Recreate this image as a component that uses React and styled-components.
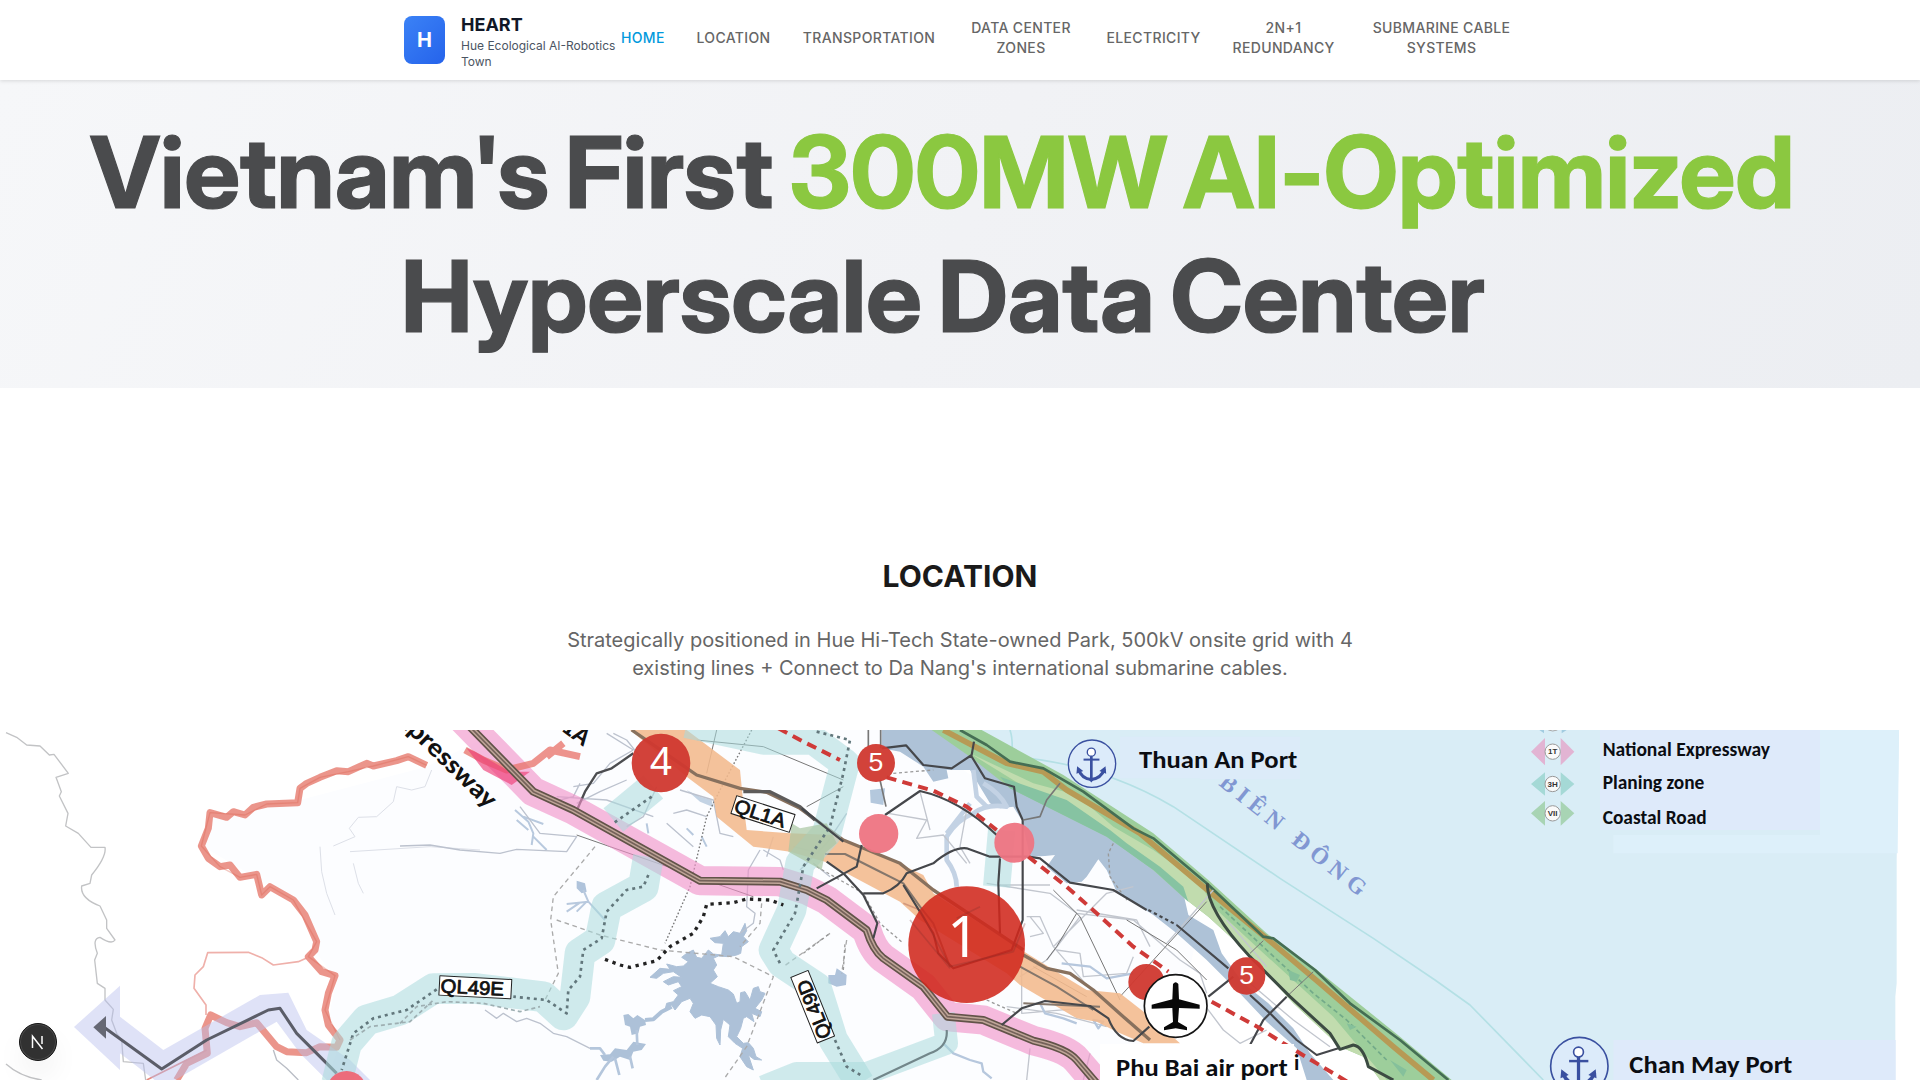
import React from "react";
import styled, { createGlobalStyle } from "styled-components";

const GlobalStyle = createGlobalStyle`
  * { box-sizing: border-box; }
  body { margin: 0; background: #fff; overflow: hidden; font-family: Inter, "Liberation Sans", sans-serif; }
  h1, h2, p { margin: 0; }
`;

const Page = styled.div`
  height: 1080px;
  overflow: hidden;
  background: #fff;
`;

const Header = styled.header`
  position: relative;
  z-index: 1;
  height: 80px;
  background: #fff;
  box-shadow: 0 1px 4px rgba(0, 0, 0, 0.13);
`;

const HeaderInner = styled.div`
  display: flex;
  height: 80px;
  padding-left: 404px;
`;

const Brand = styled.div`
  display: flex;
  align-items: center;
  gap: 16px;
  width: 217px;
  flex: none;
`;

const BrandMark = styled.div`
  display: grid;
  place-items: center;
  flex: none;
  width: 41px;
  height: 48px;
  border-radius: 8px;
  background: linear-gradient(135deg, #3b82f6, #2563eb);
  color: #fff;
  font-size: 20px;
  font-weight: 700;
`;

const BrandText = styled.div`
  padding-top: 4px;
`;

const BrandName = styled.div`
  font-size: 18px;
  line-height: 20px;
  font-weight: 700;
  color: #111827;
`;

const BrandTagline = styled.div`
  margin-top: 3px;
  width: 160px;
  font-size: 12px;
  line-height: 16px;
  color: #4b5563;
`;

const Nav = styled.nav`
  display: flex;
  align-items: center;
  gap: 32px;
  padding-bottom: 4px;
`;

const NavItem = styled.a`
  width: ${(p) => p.$w}px;
  flex: none;
  font-size: 14px;
  line-height: 20px;
  font-weight: 500;
  letter-spacing: 0.35px;
  text-align: center;
  white-space: pre-line;
  color: ${(p) => (p.$active ? "#0099dd" : "#666")};
`;

const Hero = styled.section`
  height: 308px;
  padding-top: 30px;
  background: linear-gradient(115deg, #f6f7f9 0%, #f1f2f5 50%, #eceef2 100%);
`;

const HeroLine = styled.div`
  padding-left: ${(p) => p.$indent}px;
  font-family: "Inter Display", Inter, sans-serif;
  font-variation-settings: "opsz" 32;
  font-size: 99.5px;
  line-height: 124px;
  font-weight: 700;
  letter-spacing: -0.2px;
  word-spacing: -5px;
  -webkit-text-stroke: 1.2px currentColor;
  white-space: nowrap;
  color: #4a4b4d;
`;

const Accent = styled.span`
  color: #8bc840;
`;

const Intro = styled.section`
  height: 342px;
  padding-top: 164px;
  text-align: center;
`;

const IntroTitle = styled.h2`
  font-size: 30px;
  line-height: 48px;
  font-weight: 700;
  color: #1a1a1a;
`;

const IntroText = styled.p`
  width: 800px;
  margin: 26px auto 0;
  font-size: 20px;
  line-height: 28px;
  color: #666;
`;

const MapFrame = styled.section`
  height: 350px;
  svg { display: block; }
`;

const DevBadge = styled.div`
  position: absolute;
  left: 19px;
  top: 1023px;
  width: 38px;
  height: 38px;
  border-radius: 50%;
  background: #313131;
  border: 1px solid #141414;
  box-shadow: inset 0 0 0 1px #4a4a4a, 0 16px 32px -8px rgba(0, 0, 0, 0.14);
  display: grid;
  place-items: center;
`;

const NAV = [
  ["HOME", 43.5],
  ["LOCATION", 74],
  ["TRANSPORTATION", 133],
  ["DATA CENTER\nZONES", 107],
  ["ELECTRICITY", 94],
  ["2N+1\nREDUNDANCY", 102],
  ["SUBMARINE CABLE\nSYSTEMS", 150],
];

const Label = ({ x, y, w, size = 73, children }) => (
  <text x={x} y={y} fontSize={size} textLength={w} lengthAdjust="spacingAndGlyphs"
    fontFamily='Carlito, "Open Sans", Lato, sans-serif' fontWeight="700" fill="#0b0d12">
    {children}
  </text>
);

const Anchor = ({ x, y, r }) => (
  <g transform={`translate(${x} ${y}) scale(${r / 70})`} fill="none" stroke="#3a50a0">
    <circle r="70" strokeWidth="4" fill="#dcebfa" />
    <circle cx="-2" cy="-34" r="12" strokeWidth="4" fill="#fff" />
    <path d="M-2 -22V50" strokeWidth="8" />
    <path d="M-25 -12H22" strokeWidth="6" />
    <path d="M-40 16C-34 36 -20 45 -2 47C16 45 30 36 37 16" strokeWidth="9" />
    <path d="M-46 30L-44 8L-26 22ZM42 30L40 8L22 22ZM-12 44L-2 56L8 44Z" fill="#3a50a0" stroke="none" />
  </g>
);

const Marker = ({ x, y, r, n, size, fill = "#d0382f" }) => (
  <g>
    <circle cx={x} cy={y} r={r} fill={fill} fillOpacity="0.95" />
    {n && (
      <text x={x} y={y + size * 0.3} fontSize={size} fill="#fff" textAnchor="middle"
        fontFamily='"Liberation Sans", sans-serif'>{n}</text>
    )}
  </g>
);

const RoadTag = ({ x, y, w, h, angle, size, children }) => (
  <g transform={`translate(${x} ${y}) rotate(${angle})`}>
    <rect x={-w / 2} y={-h / 2} width={w} height={h} fill="#fff" stroke="#222" strokeWidth="3" />
    <text x={-w / 2 + 4} y={size * 0.36} textLength={w - 26} lengthAdjust="spacingAndGlyphs" fontSize={size}
      fill="#111" stroke="#111" strokeWidth="2.4" fontFamily='"Liberation Sans", sans-serif'>{children}</text>
  </g>
);

const LegendArrow = ({ y, h, color, code }) => (
  <g>
    <path d={`M93 ${y}L135 ${y - h}V${y + h}ZM223 ${y}L182 ${y - h}V${y + h}Z`} fill={color} />
    <circle cx="158" cy={y} r="23" fill="#fafafa" stroke="#999" strokeWidth="3" />
    <text x="158" y={y + 8} fontSize="24" fontWeight="700" textAnchor="middle" fill="#333"
      fontFamily='"Liberation Sans", sans-serif'>{code}</text>
  </g>
);

const EXPRESSWAY =
  "M1380 -10L1600 215L1720 270L2100 482L2340 485L2420 510L2480 540L2600 630Q2618 690 2650 715L2770 800L2842 890L2950 900L3100 962Q3200 985 3230 1020L3290 1090";

const RegionMap = () => (
  <svg width="1920" height="350" viewBox="0 30 5760 1050" strokeLinejoin="round">
    {/* land tint */}
    <path d="M1280 140L900 240L630 290L610 380L780 480L900 560L950 700L1010 780L980 920L1010 1000L980 1080H3500L3600 600L2700 30H1500Z" fill="#fcfdff" />

    {/* sea and label backgrounds */}
    <g transform="translate(2400)">
      <path d="M500 30H3297L3290 420V790L3286 830V1080H1950L1545 745L1400 640L1225 480L1060 345L740 145Z" fill="#d9edf6" />
      <path d="M960 50H1500V175H960Z" fill="#dcebf9" />
      <path d="M630 30Q640 60 635 110Q900 130 1120 260L1440 475L1720 655L1905 780L2010 855L2230 1080" fill="none" stroke="#b4e0e5" strokeWidth="5" />
    </g>
    <g transform="translate(4500)">
      <path d="M300 30H960V330H300Z" fill="#deeafa" />
      <path d="M960 30H1197L1193 400H340V345H960Z" fill="#ddf0fa" />
      <path d="M340 960H1187V1080H340Z" fill="#deeafa" />
    </g>

    {/* lagoon and coast */}
    <g transform="translate(2400)">
      <path d="M245 30H400L520 110L640 190L760 250L930 340L1020 410L1150 520L1165 585L1240 630L1265 700L1330 790L1405 850L1480 925L1530 1000L1600 1080H1520L1490 985L1400 905L1310 810L1220 720L1130 640L1060 585L950 515L920 450L895 418L860 470L845 485L800 490L740 440L765 405L735 408L690 410L665 300L640 260L600 265L570 250L540 200L510 150L440 150L445 175L400 185L370 140L300 95L245 85Z" fill="#aec2d7" />
      <path d="M550 190Q600 220 620 260Q560 250 520 280Q470 300 440 350L440 420Q470 460 470 500M510 250L440 340M520 150L530 230L560 260" fill="none" stroke="#c3d2e4" strokeWidth="14" />
      <path d="M210 210L255 205L250 255L212 248Z" fill="#b4c8dd" />
      <path d="M395 30H545L790 165L1060 340L1225 480L1400 640L1545 745L1800 950L1955 1080H1740L1690 1010L1620 980L1480 850L1345 700L1225 590L1160 540L1060 450L920 350L760 270L630 205L510 110Z" fill="#9dce9b" />
      <path d="M510 100L700 190L830 225L940 320L1060 390L1200 490L1240 560L1380 690L1600 890L1760 1080H1740L1690 1010L1620 980L1480 850L1345 700L1225 590L1160 540L1060 450L960 360Q850 280 720 230Z" fill="#c1dcae" />
      <path d="M600 170L800 240L930 330L980 370L1080 440L1150 500L1165 545L1060 450L920 350L760 270L630 205Z" fill="#86c3a2" />
      <path d="M430 30L620 130L730 155L800 210L1020 340L1210 500L1400 655L1560 790L1780 980L1900 1080" fill="none" stroke="#b79a55" strokeWidth="17" />
      <path d="M480 30L560 75L630 125L730 145L850 215L1000 325L1060 355L1220 490L1390 650L1420 655L1545 750L1650 850L1800 960L1945 1080" fill="none" stroke="#456e54" strokeWidth="8" />
      <path d="M1260 560L1400 690L1540 820L1640 900L1760 1020" fill="none" stroke="#73aa89" strokeWidth="5" strokeDasharray="14 9" />
      <path d="M1465 750L1500 765L1490 785L1470 780ZM1640 910L1670 920L1650 930ZM1770 1020L1820 1050L1810 1070Z" fill="#85c09b" />
    </g>

    {/* western boundary */}
    <g fill="none">
      <path d="M18 38L50 52L80 75L120 78L148 105L162 103L205 160L168 172L184 215L178 228L204 280L197 318L235 340L273 382L315 382Q320 410 275 465L270 490L245 498Q240 535 300 558L320 600L320 625L345 660Q335 675 300 652Q275 655 292 700L284 720L292 790L315 805L315 840L340 868L335 900L350 940L365 960L370 1025L430 1030L437 1080M18 1032Q60 1070 125 1080" stroke="#c2c3c5" strokeWidth="4" />
      <path d="M618 885V855L582 805L585 765L610 740L623 698L745 697L785 713L820 735L895 725L920 714" stroke="#efb0aa" strokeWidth="5" />
      <path d="M820 990L830 1020L860 1045L895 1080" stroke="#b9bdc5" strokeWidth="4" />
      <path d="M1295 150L1275 200L1235 210L1190 200L1180 245L1130 290L1075 292L1048 325L1065 350L1000 378M960 380L965 455L980 520L1005 585M1050 395L1290 380L1440 390M1060 430L1075 490L1090 520" stroke="#dde0e8" strokeWidth="3" />
      <path d="M1280 136L1225 110L1190 122L1120 138L1100 130L1045 155L1010 152L960 172L920 190L900 205L893 248L800 252L760 262L735 285L700 275L680 292L630 278L625 325L604 378L625 415L660 440L690 435L720 472L770 463L785 525L810 500L880 540L915 585L950 665L945 690L925 710L965 755L1005 767L985 820L975 870L985 915L1020 960L1010 982L960 980L920 998L860 995L830 980L770 908L720 920L680 908L632 885L615 925L622 1000L560 1030L530 1080" stroke="#e98a7e" strokeWidth="21" opacity=".9" />
      <path d="M1280 136L1225 110L1120 138L1045 155L960 172L900 205L893 248L800 252L735 285L630 278L604 378L660 440L720 472L770 463L785 525L810 500L880 540L950 665L925 710L1005 767L975 870L1020 960" stroke="#d9614f" strokeWidth="4" opacity=".35" />
      <path d="M440 1080L560 1020L620 990" stroke="#e58a80" strokeWidth="5" />
    </g>
    <path d="M222 921L360 797V890L490 990L780 825L865 818L920 930L1050 1020L1110 1080H980L900 1000L830 905L490 1100L360 1000V1050Z" fill="#b9bfee" fillOpacity=".45" />
    <path d="M310 920L485 1047L620 960L805 870L840 865L890 940L1010 1060" fill="none" stroke="#5b5d68" strokeWidth="9" />
    <path d="M280 922L318 888V956Z" fill="#666874" />

    {/* waterways, reservoirs and minor roads */}
    <g transform="translate(1200)" fill="none">
      <path d="M860 700L880 690L890 712L905 715L925 690L940 702L965 705L970 670L945 668L930 655L960 650L975 632L985 650L1000 635L1020 640L1035 610L1040 632L1030 650L1045 665L1025 680L1022 700L1010 705L985 710L955 708L940 715L950 735L940 750L952 770L930 790L955 800L985 810L1000 822L1010 850L1020 845L1022 818L1035 815L1050 840L1060 805L1075 800L1080 815L1095 820L1085 840L1065 865L1085 875L1080 890L1055 880L1062 905L1040 890L1030 895L1022 925L1010 950L1030 970L1045 968L1060 985L1068 1010L1085 1020L1062 1018L1045 1005L1060 1050L1040 1040L1020 1010L1028 985L1005 970L985 950L990 915L970 898L962 930L960 975L950 955L948 915L930 890L905 885L885 895L870 875L880 850L870 835L845 845L825 870L815 855L795 870L800 850L820 845L835 825L820 812L845 800L835 785L805 795L790 785L820 770L845 772L820 755L790 760L770 775L750 772L780 745L810 748L800 732L830 740L850 738L865 725L845 712Z" fill="#adc1d8" stroke="#adc1d8" strokeWidth="3" />
      <path d="M815 860L785 875L760 898L735 900" stroke="#adc1d8" strokeWidth="12" />
      <path d="M670 885L685 882L700 895L712 885L735 900L738 915L720 920L715 940L695 945L690 920L675 915ZM600 1005L630 1003L645 985L680 990L700 965L738 972L725 990L700 995L690 1020L660 1010L635 1025L610 1022Z" fill="#adc1d8" />
      <path d="M710 930L712 975M640 1010L615 1040L590 1080M645 1015L658 1065M690 1010L698 1045M615 1005L600 985L570 985" stroke="#b4c6dc" strokeWidth="8" />
      <path d="M530 482L555 490L560 515L545 520L530 505Z M1285 765L1305 765L1310 745L1340 765L1338 795L1310 800L1285 790Z" fill="#afc3db" />
      <path d="M550 510L565 545L500 552M560 545L530 575M540 548L500 575M565 545L615 600M345 270L385 305L400 340L395 375M370 290L430 312M385 330L350 300M400 350L440 390M740 310L745 340M860 325L880 345M905 350L920 380" stroke="#b8c9de" strokeWidth="6" />
      <path d="M860 210L900 230L935 240L940 262L900 245Z" fill="#c3d3e4" />
      <path d="M0 378L90 375L180 390L300 400L350 388L500 395L530 350L420 340L360 260M520 200L580 190L630 130L700 90M530 250L600 215L680 180M540 190L520 230L480 240M620 40L700 90M640 40L680 60L720 110M840 210L940 240L960 340L1000 350M680 320L730 290L770 200M1080 390L1045 450L1040 560L1065 580L1060 610L1020 640M255 870L290 895L310 880L350 905L380 895L420 910L460 940L500 950L570 985M1200 450L1280 370L1340 280M1090 390L1140 420L1150 450M800 310L880 380M820 280L860 270L920 290M470 230L620 240L760 290M1100 410L1120 350M1180 380L1260 400M1240 430L1290 470" stroke="#bcc2ce" strokeWidth="4" />
      <path d="M890 60L1090 80L1330 180M950 30L920 160M530 345L1060 530M1220 260L1330 200" stroke="#777" strokeWidth="3" />
      <path d="M530 272L555 215L590 160L635 145L700 100" stroke="#4c4d50" strokeWidth="7" />
      <path d="M1055 30L960 210L920 290L870 500L795 670" stroke="#777" strokeWidth="4" strokeDasharray="5 6" />
      <path d="M585 380L460 530L452 600L475 760L435 840M470 600L600 645L780 690L1000 710L1120 770L1040 980L970 1080M1085 550L1080 610L1020 680M1290 640L1150 740M1340 660L1325 760" stroke="#aaa" strokeWidth="4" strokeDasharray="14 11" />
    </g>
    <g transform="translate(2400)" fill="none">
      <path d="M265 280L380 300L350 355L430 345L500 430M360 215L390 330M500 270L480 380L510 430M560 490L750 520L830 580L1000 600L1140 720L1200 760L1220 820M600 495H750M665 700V880L900 860M840 590L740 720L660 770M680 590H720L760 680L890 830M760 680L920 520L1000 500M690 650L730 640L690 590M830 570L1010 600L1050 680M770 690L840 700L850 770L980 760L1000 710M620 860L770 880L920 920M690 985L680 1080M870 1000L850 1080M1210 850L1270 930L1320 970L1400 930M1350 790L1480 900L1590 980M1280 600L1400 740M1100 670L1240 510" stroke="#c2c6ce" strokeWidth="4" />
      <path d="M430 970L460 1000L510 1020L545 1030L550 1055L575 1075M720 850L735 880L790 895L830 910M785 730L870 740L920 775L1000 760M880 900L910 905L895 925Z" stroke="#b6c7dd" strokeWidth="7" />
      <path d="M830 580L770 680L740 720M980 600L1130 690L1220 780M760 510L840 590L960 840M700 740L860 830M960 830L1220 545M1460 830L1540 755M1350 700L1390 662" stroke="#777" strokeWidth="3" />
      <path d="M50 440L190 520L240 610L310 670M940 370L925 400L930 470L980 540M280 160L400 150M560 840L650 880M10 700L90 640M130 750L135 670" stroke="#999" strokeWidth="4" strokeDasharray="9 8" />
    </g>

    {/* orange highway */}
    <path d="M1890 30H2060L2220 150L2228 230L2240 330L2370 340L2500 345L2610 390L2770 465L2800 520L3080 700L3170 755L3260 810L3360 820L3450 890L3540 970H3430L3350 935L3290 905L3230 895L3060 795L3020 760L2760 600L2700 545L2475 425L2370 395L2260 380L2150 290L2140 230L2060 170Z" fill="#f3ba8d" fillOpacity=".88" />
    <path d="M1895 30L2090 165L2220 205L2300 217L2400 265L2530 360L2700 430L2800 510L3070 690M3070 705L3140 745L3210 760L3280 810L3370 890L3450 960" fill="none" stroke="#88715e" strokeWidth="10" />
    <path d="M2230 215H2310L2400 260L2445 300" fill="none" stroke="#5d5b5a" strokeWidth="10" />
    <path d="M2475 402H2535L2630 450L2710 490L2760 560L2800 610L2850 740M3060 740L3170 800L3280 870M3070 850L3300 860" fill="none" stroke="#85776c" strokeWidth="6" />

    {/* pink expressway */}
    <path d={EXPRESSWAY} fill="none" stroke="#f092c8" strokeOpacity=".62" strokeWidth="88" />
    <path d="M1395 90L1450 120L1520 150L1600 130L1650 90L1740 110M1640 110L1690 70" fill="none" stroke="#e87870" strokeWidth="21" opacity=".8" />
    <path d="M1400 85L1425 95L1530 155L1590 155L1535 195L1450 150Z" fill="#ee3d77" opacity=".65" />

    {/* teal planning zones */}
    <g fill="none" stroke="#a9dbdd" strokeOpacity=".55">
      <path d="M1960 200L1840 300" strokeWidth="92" />
      <path d="M1945 410L1930 500L1820 560L1800 660L1740 700L1725 830L1690 885L1630 830L1420 805L1300 806L1200 870L1100 900L1040 970L1010 1090" strokeWidth="92" />
      <path d="M2060 10L2290 60L2440 60L2535 130L2480 340L2400 430L2375 570L2320 690L2345 730L2450 800L2500 960L2580 1090" strokeWidth="88" />
      <path d="M3005 330L2990 500" strokeWidth="82" />
      <path d="M2290 1100L2390 1060L2600 1060L2840 970L2830 880" strokeWidth="68" />
    </g>
    <path d="M2375 310L2400 325L2480 310L2510 370L2475 400L2465 450L2365 395Z" fill="#a9c6a3" fillOpacity=".7" />

    <path d={EXPRESSWAY} fill="none" stroke="#625349" strokeWidth="24" />
    <path d={EXPRESSWAY} fill="none" stroke="#bfa598" strokeWidth="14" />
    <path d={EXPRESSWAY} fill="none" stroke="#75625a" strokeWidth="5" />

    <g fill="none" stroke="#62777c" strokeWidth="8" strokeDasharray="9 12">
      <path d="M1955 230L1840 310M1945 465L1930 500L1880 510L1820 575L1805 655L1750 690L1740 770L1705 810L1700 880L1640 840L1540 830M1310 808L1220 870L1120 895L1060 940L1025 1050" />
      <path d="M2450 35L2550 60L2530 160L2490 320L2410 440L2385 580L2320 690L2340 730M2505 960L2540 1040L2590 1070" />
    </g>
    <path d="M1815 718L1860 735L1890 742L1970 722L2010 680L2080 640L2110 590L2120 553L2200 548L2240 537L2310 540L2350 555" fill="none" stroke="#222" strokeWidth="10" strokeDasharray="10 14" />
    <path d="M1200 910L1250 860L1340 845L1450 850L1560 875L1620 860M1050 960L1110 920L1230 905L1300 840" fill="none" stroke="#9eafb2" strokeWidth="5" strokeDasharray="12 9" />

    {/* main local roads */}
    <g transform="translate(2400)" fill="none" stroke="#45474b" strokeWidth="6.5">
      <path d="M5 265L130 365M255 285L360 213Q480 240 590 345M245 85L318 76L370 135L455 145L515 105L522 65M512 105L555 175L642 200L650 260L668 300V600L635 690L460 745L415 700L400 640L310 495M190 520H250Q300 500 320 460L400 430Q460 380 500 385L570 410H685L720 415L810 488L940 510L1040 570M1130 615L1285 745M50 505L170 440L185 375M80 425L130 460L190 525L232 610L220 655M600 415L595 490L600 640M1350 825L1410 880L1490 960L1550 1005L1615 985M1225 830L1300 770M1350 975L1390 900L1460 830M605 915L665 865L735 843L870 858L925 895Q950 960 1000 963L1048 920" />
      <path d="M1222 490Q1220 570 1350 710L1470 830L1590 940L1620 988L1660 975Q1690 980 1705 1040L1780 1080" strokeWidth="9" stroke="#3c4b42" />
      <path d="M1045 570L1130 615" strokeDasharray="10 9" />
      <path d="M440 930Q445 980 390 1000L220 1080" stroke="#72868a" />
      <path d="M205 30V80M242 30V85M240 180L258 260M780 190L740 240L720 290L670 300" stroke="#777" strokeWidth="5" />
    </g>
    <path d="M2335 25L2410 65L2520 120M2660 172L2800 212L2900 260L2990 330M3085 410L3200 500L3290 580L3400 680L3505 755M3635 845L3780 925L3850 970L4050 1090" fill="none" stroke="#cf3a38" strokeWidth="12" strokeDasharray="30 19" />

    {/* markers */}
    <Marker x={1983} y={129} r={88} n="4" size={122} />
    <Marker x={2628} y={129} r={57} n="5" size={80} />
    <Marker x={2636} y={341} r={59} fill="#ee7482" />
    <Marker x={3043} y={368} r={60} fill="#ee7482" />
    <Marker x={3439} y={786} r={54} />
    <Marker x={3740} y={768} r={56} n="5" size={80} />
    <Marker x={1040} y={1113} r={60} fill="#ee6575" />
    <circle cx="2900" cy="674" r="175" fill="#d0281d" fillOpacity=".88" />
    <path d="M2710 550L2760 570L2850 740L3040 695L3075 610M2730 600L2850 745M2870 595L2940 560" fill="none" stroke="#812d2a" strokeWidth="5" opacity=".28" />
    <text x="2890" y="710" fontSize="168" textAnchor="middle" fill="#fff" fontFamily='"Noto Sans", sans-serif'>1</text>

    <path d="M3300 972H3882V1080H3300Z" fill="#fff" />
    <g transform="translate(3527 858)">
      <circle r="94" fill="#fff" stroke="#161616" strokeWidth="5" />
      <path d="M-8 -66Q0 -76 8 -66L10 -20L72 -4V8L10 6L7 48L34 64V73L0 67L-35 73V64L-8 48L-10 6L-72 8V-4L-10 -20Z" fill="#080808" />
    </g>

    <Anchor x={3276} y={131} r={71} />
    <Anchor x={4738} y={1038} r={86} />

    {/* road names */}
    <RoadTag x={2289} y={282} w={184} h={56} angle={18} size={58}>QL1A</RoadTag>
    <RoadTag x={1426} y={802} w={216} h={58} angle={3} size={58}>QL49E</RoadTag>
    <RoadTag x={2438} y={860} w={212} h={56} angle={-112} size={58}>QL49D</RoadTag>
    <text transform="translate(1462 268) rotate(44)" textAnchor="end" fontSize="78" fontWeight="700" fill="#111"
      fontFamily='Carlito, "Open Sans", sans-serif' textLength="420" lengthAdjust="spacingAndGlyphs">Expressway</text>
    <text transform="translate(1750 80) rotate(36)" textAnchor="end" fontSize="78" fontWeight="700" fill="#111"
      fontFamily='Carlito, "Open Sans", sans-serif'>QL1A</text>
    <text transform="translate(3654 194) rotate(38.5)" fontSize="70" fontWeight="700" fill="#8197d2"
      fontFamily='"Liberation Serif", serif' textLength="540">BIÊN ĐÔNG</text>
    <path d="M3600 60H3900V178H3600Z" fill="#dcebf9" />

    <Label x={3417} y={144} w={475}>Thuan An Port</Label>
    <Label x={3348} y={1067} w={515}>Phu Bai air port</Label>
    <Label x={3882} y={1050} w={16} size={66}>i</Label>
    <Label x={4888} y={1059} w={489}>Chan May Port</Label>
    <Label x={4808} y={109} w={502} size={60}>National Expressway</Label>
    <Label x={4808} y={206} w={305} size={60}>Planing zone</Label>
    <Label x={4808} y={311} w={312} size={60}>Coastal Road</Label>

    <g transform="translate(4500)">
      <path d="M118 30H132V40ZM185 30H200L185 40Z" fill="#a2cce0" />
      <path d="M145 30Q158 36 172 30" fill="none" stroke="#aaa" strokeWidth="3" />
      <LegendArrow y={95} h={41} color="#e2b4d3" code="1T" />
      <LegendArrow y={192} h={35} color="#a5d9d6" code="3H" />
      <LegendArrow y={280} h={37} color="#a8d4b4" code="VII" />
    </g>
  </svg>
);

export default function App() {
  return (
    <Page>
      <GlobalStyle />
      <Header>
        <HeaderInner>
          <Brand>
            <BrandMark>H</BrandMark>
            <BrandText>
              <BrandName>HEART</BrandName>
              <BrandTagline>Hue Ecological AI-Robotics Town</BrandTagline>
            </BrandText>
          </Brand>
          <Nav>
            {NAV.map(([label, w], i) => (
              <NavItem key={label} $w={w} $active={i === 0}>{label}</NavItem>
            ))}
          </Nav>
        </HeaderInner>
      </Header>
      <Hero>
        <h1>
          <HeroLine $indent={90}>
            Vietnam's First <Accent>300MW AI-Optimized</Accent>
          </HeroLine>
          <HeroLine $indent={401}>Hyperscale Data Center</HeroLine>
        </h1>
      </Hero>
      <Intro>
        <IntroTitle>LOCATION</IntroTitle>
        <IntroText>
          Strategically positioned in Hue Hi-Tech State-owned Park, 500kV onsite grid with 4
          existing lines + Connect to Da Nang's international submarine cables.
        </IntroText>
      </Intro>
      <MapFrame>
        <RegionMap />
      </MapFrame>
      <DevBadge>
        <svg width="16" height="16" viewBox="0 0 16 16" fill="none" stroke="#fff" strokeWidth="1.5">
          <path d="M2.5 14V2.2L12.5 15" />
          <path d="M12 2V10" />
        </svg>
      </DevBadge>
    </Page>
  );
}
